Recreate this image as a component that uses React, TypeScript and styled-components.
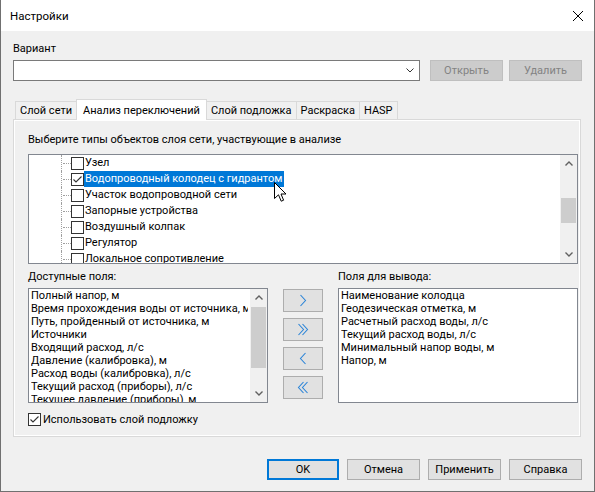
import styled, { createGlobalStyle } from "styled-components";

const GlobalStyle = createGlobalStyle`
  html, body {
    margin: 0;
    padding: 0;
    background: #f0f0f0;
  }
  body {
    font-family: Roboto, "Noto Sans", sans-serif;
    font-size: 11px;
    color: #000;
  }
  * { box-sizing: border-box; }
`;

const Window = styled.div`
  position: relative;
  width: 595px;
  height: 492px;
  display: flex;
  flex-direction: column;
  background: #f0f0f0;
  border: 1px solid #707070;
  border-top: none;
  overflow: hidden;
`;

const TitleBar = styled.div`
  height: 31px;
  flex: none;
  background: #fff;
  display: flex;
  align-items: center;
  justify-content: space-between;
  padding: 0 10px 0 9px;
  font-size: 11.5px;
`;

const Body = styled.div`
  display: flex;
  flex-direction: column;
  padding: 10px 12px 0 12px;
`;

const Label = styled.div`
  height: 16px;
  line-height: 16px;
  white-space: nowrap;
`;

const VariantRow = styled.div`
  display: flex;
  margin-top: 3px;
  gap: 6px;
`;

const Combo = styled.div`
  width: 407px;
  height: 21px;
  margin-right: 4px;
  background: #fff;
  border: 1px solid #7a7a7a;
  display: flex;
  align-items: center;
  justify-content: flex-end;
  padding-right: 5px;
`;

const Button = styled.div<{ $disabled?: boolean; $default?: boolean; $w?: number }>`
  width: ${(p) => p.$w ?? 73}px;
  height: 21px;
  display: flex;
  align-items: center;
  justify-content: center;
  background: ${(p) => (p.$disabled ? "#cccccc" : "#e1e1e1")};
  border: ${(p) => (p.$default ? "2px solid #0078d7" : p.$disabled ? "1px solid #bfbfbf" : "1px solid #adadad")};
  color: ${(p) => (p.$disabled ? "#838383" : "#000")};
  white-space: nowrap;
`;

const TabStrip = styled.div`
  display: flex;
  align-items: flex-end;
  height: 21px;
  margin-top: 18px;
  padding-left: 3px;
  margin-bottom: -1px;
  position: relative;
  z-index: 1;
`;

const Tab = styled.div<{ $active?: boolean }>`
  height: ${(p) => (p.$active ? 21 : 19)}px;
  padding: ${(p) => (p.$active ? "1px 6px 0" : "0 4px")};
  display: flex;
  align-items: center;
  background: ${(p) => (p.$active ? "#fff" : "#f0f0f0")};
  border: 1px solid #d9d9d9;
  border-bottom: ${(p) => (p.$active ? "none" : "1px solid #d9d9d9")};
  margin-left: -1px;
  white-space: nowrap;
  position: relative;
  z-index: ${(p) => (p.$active ? 2 : 1)};
`;

const Panel = styled.div`
  height: 318px;
  margin-right: 1px;
  border: 1px solid #d9d9d9;
  box-shadow: inset 0 0 0 1px #fff;
  padding: 12px 2px 0 14px;
  display: flex;
  flex-direction: column;
`;

const TreeBox = styled.div`
  height: 110px;
  margin-top: 6px;
  background: #fff;
  border: 1px solid #828790;
  display: flex;
  overflow: hidden;
`;

const TreeItems = styled.div`
  flex: 1;
  overflow: hidden;
  padding-left: 32px;
`;

const TreeRow = styled.div`
  height: 16px;
  display: flex;
  align-items: center;
`;

const Connector = styled.div`
  width: 10px;
  height: 16px;
  border-left: 1px dotted #a0a0a0;
  position: relative;
  &::after {
    content: "";
    position: absolute;
    left: 1px;
    right: 0;
    top: 8px;
    border-top: 1px dotted #a0a0a0;
  }
`;

const Box = styled.div`
  width: 13px;
  height: 13px;
  flex: none;
  background: #fff;
  border: 1px solid #333;
  display: flex;
  align-items: center;
  justify-content: center;
`;

const TreeLabel = styled.div<{ $selected?: boolean }>`
  height: 16px;
  line-height: 16px;
  padding: 0 2px 0 1px;
  white-space: nowrap;
  background: ${(p) => (p.$selected ? "#0078d7" : "transparent")};
  color: ${(p) => (p.$selected ? "#fff" : "#000")};
`;

const ScrollBar = styled.div`
  width: 17px;
  flex: none;
  background: #f0f0f0;
  display: flex;
  flex-direction: column;
`;

const ScrollArrow = styled.div`
  height: 17px;
  flex: none;
  display: flex;
  align-items: center;
  justify-content: center;
`;

const Track = styled.div`
  flex: 1;
  padding: 0 1px;
`;

const Thumb = styled.div<{ $top: number; $h: number }>`
  margin-top: ${(p) => p.$top}px;
  height: ${(p) => p.$h}px;
  background: #cdcdcd;
`;

const FieldsGrid = styled.div`
  display: grid;
  grid-template-columns: 240px 1fr 240px;
  grid-template-rows: 16px 115px;
  row-gap: 3px;
  margin-top: 5px;
`;

const ListBox = styled.div`
  background: #fff;
  border: 1px solid #828790;
  display: flex;
  overflow: hidden;
`;

const ListItems = styled.div`
  flex: 1;
  overflow: hidden;
  padding: 0 2px;
`;

const ListItem = styled.div`
  height: 13px;
  line-height: 13px;
  white-space: nowrap;
  overflow: hidden;
`;

const MoveColumn = styled.div`
  display: flex;
  flex-direction: column;
  align-items: center;
  gap: 6px;
  padding-top: 1px;
`;

const MoveButton = styled.div`
  width: 40px;
  height: 23px;
  background: #e1e1e1;
  border: 1px solid #adadad;
  display: flex;
  align-items: center;
  justify-content: center;
`;

const CheckRow = styled.div`
  display: flex;
  align-items: center;
  gap: 2px;
  height: 16px;
  margin-top: 8px;
`;

const Footer = styled.div`
  display: flex;
  justify-content: flex-end;
  gap: 8px;
  margin-top: 22px;
`;

const Cursor = styled.svg`
  position: absolute;
  left: 273px;
  top: 182px;
`;

const Check = () => (
  <svg width="11" height="11" viewBox="0 0 11 11">
    <polyline points="1.5,5.5 4,8 9.5,2.5" fill="none" stroke="#333" strokeWidth="1.1" />
  </svg>
);

const Chevron = ({ dir }: { dir: "up" | "down" }) => (
  <svg width="8" height="5" viewBox="0 0 8 5">
    <polyline
      points={dir === "up" ? "0.5,4.5 4,1 7.5,4.5" : "0.5,0.5 4,4 7.5,0.5"}
      fill="none"
      stroke="#606060"
      strokeWidth="1.4"
    />
  </svg>
);

const Move = ({ dir, double }: { dir: "right" | "left"; double?: boolean }) => {
  const one = (x: number) =>
    dir === "right" ? `${x},1 ${x + 5},6.5 ${x},12` : `${x + 5},1 ${x},6.5 ${x + 5},12`;
  return (
    <svg width="14" height="13" viewBox="0 0 14 13">
      {double ? (
        <>
          <polyline points={one(2.5)} fill="none" stroke="#2b84d8" strokeWidth="1.1" />
          <polyline points={one(6.5)} fill="none" stroke="#2b84d8" strokeWidth="1.1" />
        </>
      ) : (
        <polyline points={one(4.5)} fill="none" stroke="#2b84d8" strokeWidth="1.1" />
      )}
    </svg>
  );
};

const treeItems = [
  { text: "Узел" },
  { text: "Водопроводный колодец с гидрантом", checked: true, selected: true },
  { text: "Участок водопроводной сети" },
  { text: "Запорные устройства" },
  { text: "Воздушный колпак" },
  { text: "Регулятор" },
  { text: "Локальное сопротивление" },
];

const available = [
  "Полный напор, м",
  "Время прохождения воды от источника, мин",
  "Путь, пройденный от источника, м",
  "Источники",
  "Входящий расход, л/с",
  "Давление (калибровка), м",
  "Расход воды (калибровка), л/с",
  "Текущий расход (приборы), л/с",
  "Текущее давление (приборы), м",
];

const output = [
  "Наименование колодца",
  "Геодезическая отметка, м",
  "Расчетный расход воды, л/с",
  "Текущий расход воды, л/с",
  "Минимальный напор воды, м",
  "Напор, м",
];

const tabs = ["Слой сети", "Анализ переключений", "Слой подложка", "Раскраска", "HASP"];

export default function App() {
  return (
    <>
      <GlobalStyle />
      <Window>
        <TitleBar>
          <span>Настройки</span>
          <svg width="12" height="12" viewBox="0 0 12 12">
            <path d="M1 1 L11 11 M11 1 L1 11" stroke="#000" strokeWidth="1" />
          </svg>
        </TitleBar>
        <Body>
          <Label>Вариант</Label>
          <VariantRow>
            <Combo>
              <svg width="8" height="5" viewBox="0 0 8 5">
                <polyline points="0.5,0.5 4,4 7.5,0.5" fill="none" stroke="#333" strokeWidth="1" />
              </svg>
            </Combo>
            <Button $disabled>Открыть</Button>
            <Button $disabled>Удалить</Button>
          </VariantRow>

          <TabStrip>
            {tabs.map((t, i) => (
              <Tab key={t} $active={i === 1}>
                {t}
              </Tab>
            ))}
          </TabStrip>
          <Panel>
            <Label>Выберите типы объектов слоя сети, участвующие в анализе</Label>
            <TreeBox>
              <TreeItems>
                {treeItems.map((it) => (
                  <TreeRow key={it.text}>
                    <Connector />
                    <Box>{it.checked && <Check />}</Box>
                    <TreeLabel $selected={it.selected}>{it.text}</TreeLabel>
                  </TreeRow>
                ))}
              </TreeItems>
              <ScrollBar>
                <ScrollArrow>
                  <Chevron dir="up" />
                </ScrollArrow>
                <Track>
                  <Thumb $top={26} $h={25} />
                </Track>
                <ScrollArrow>
                  <Chevron dir="down" />
                </ScrollArrow>
              </ScrollBar>
            </TreeBox>

            <FieldsGrid>
              <Label>Доступные поля:</Label>
              <div />
              <Label>Поля для вывода:</Label>
              <ListBox>
                <ListItems>
                  {available.map((f) => (
                    <ListItem key={f}>{f}</ListItem>
                  ))}
                </ListItems>
                <ScrollBar>
                  <ScrollArrow>
                    <Chevron dir="up" />
                  </ScrollArrow>
                  <Track>
                    <Thumb $top={1} $h={61} />
                  </Track>
                  <ScrollArrow>
                    <Chevron dir="down" />
                  </ScrollArrow>
                </ScrollBar>
              </ListBox>
              <MoveColumn>
                <MoveButton>
                  <Move dir="right" />
                </MoveButton>
                <MoveButton>
                  <Move dir="right" double />
                </MoveButton>
                <MoveButton>
                  <Move dir="left" />
                </MoveButton>
                <MoveButton>
                  <Move dir="left" double />
                </MoveButton>
              </MoveColumn>
              <ListBox>
                <ListItems>
                  {output.map((f) => (
                    <ListItem key={f}>{f}</ListItem>
                  ))}
                </ListItems>
              </ListBox>
            </FieldsGrid>

            <CheckRow>
              <Box>
                <Check />
              </Box>
              <span>Использовать слой подложку</span>
            </CheckRow>
          </Panel>

          <Footer>
            <Button $default $w={72}>OK</Button>
            <Button>Отмена</Button>
            <Button>Применить</Button>
            <Button>Справка</Button>
          </Footer>
        </Body>

        <Cursor width="13" height="21" viewBox="0 0 13 21">
          <path
            d="M0.5 0.5 L0.5 16.5 L4.5 12.8 L7.2 19.2 L9.6 18.2 L7 12 L12 12 Z"
            fill="#fff"
            stroke="#000"
            strokeWidth="1"
            strokeLinejoin="round"
          />
        </Cursor>
      </Window>
    </>
  );
}
